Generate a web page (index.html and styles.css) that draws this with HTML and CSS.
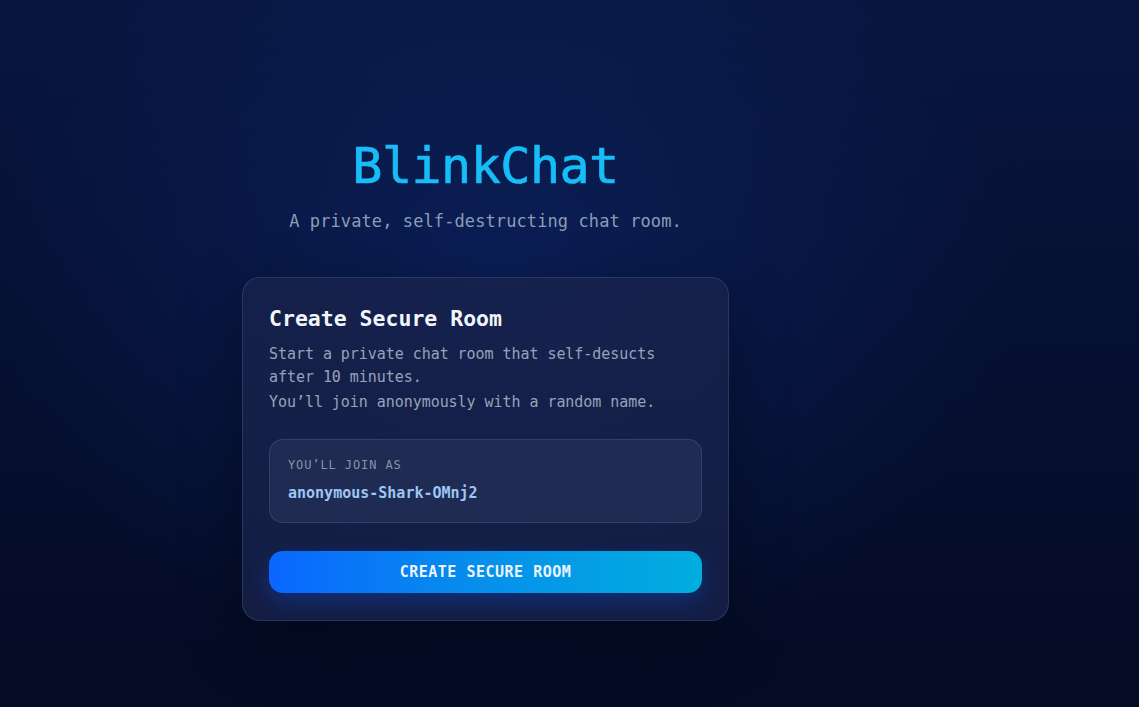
FILE: index.html
```html
<!DOCTYPE html>
<html lang="en">
  <head>
    <meta charset="UTF-8" />
    <meta name="viewport" content="width=device-width, initial-scale=1.0" />
    <title>BlinkChat</title>
    <link rel="stylesheet" href="styles.css">
  </head>
  <body>
    <main class="lobby">
      <header class="brand">
        <h1 class="brand-title">BlinkChat</h1>
        <p class="brand-tagline">A private, self-destructing chat room.</p>
      </header>

      <section class="room-card">
        <h2 class="room-title">Create Secure Room</h2>
        <p class="room-text">Start a private chat room that self-desucts after 10 minutes.</p>
        <p class="room-text room-text-last">You’ll join anonymously with a random name.</p>

        <div class="identity">
          <span class="identity-label">You’ll join as</span>
          <span class="identity-name">anonymous-Shark-OMnj2</span>
        </div>

        <button class="create-button">Create Secure Room</button>
      </section>
    </main>
  </body>
</html>
```

FILE: styles.css
```css
html,
body {
  height: 100%;
}

body {
  margin: 0;
  font-family: "DejaVu Sans Mono", "Liberation Mono", monospace;
  color: #e6ecf7;
  background-color: #060e2a;
  background-image:
    radial-gradient(ellipse 520px 420px at 500px 260px, rgba(14, 40, 110, 0.55), rgba(14, 40, 110, 0) 100%),
    linear-gradient(180deg, #08163f 0%, #061033 45%, #040b24 100%);
  overflow: hidden;
}

.lobby {
  width: 487px;
  margin-left: 242px;
  padding-top: 135px;
  display: flex;
  flex-direction: column;
}

.brand {
  text-align: center;
  margin-bottom: 44px;
}

.brand-title {
  margin: 0;
  font-size: 50px;
  line-height: 62px;
  font-weight: 500;
  color: #17bdf7;
  letter-spacing: -0.5px;
  -webkit-text-stroke: 0.7px #17bdf7;
}

.brand-tagline {
  margin: 12px 0 0;
  font-size: 17px;
  line-height: 24px;
  color: #8c9cb8;
  letter-spacing: 0.1px;
}

.room-card {
  display: flex;
  flex-direction: column;
  padding: 26px 26px 27px;
  background: rgba(26, 36, 76, 0.72);
  border: 1px solid rgba(120, 140, 190, 0.22);
  border-radius: 18px;
  box-shadow: 0 20px 60px rgba(0, 0, 0, 0.35);
}

.room-title {
  margin: 1px 0 10px;
  font-size: 21.5px;
  line-height: 28px;
  font-weight: 700;
  color: #f1f5fc;
}

.room-text {
  margin: 0;
  font-size: 15px;
  line-height: 23px;
  color: #97a2b8;
  letter-spacing: -0.05px;
}

.room-text-last {
  margin-top: 2px;
}

.identity {
  display: flex;
  flex-direction: column;
  gap: 8px;
  margin-top: 25px;
  padding: 16px 18px 18px;
  background: rgba(40, 52, 92, 0.55);
  border: 1px solid rgba(120, 140, 190, 0.22);
  border-radius: 14px;
}

.identity-label {
  font-size: 12px;
  line-height: 18px;
  text-transform: uppercase;
  letter-spacing: 0.9px;
  color: #8a93a8;
}

.identity-name {
  font-size: 15px;
  line-height: 22px;
  font-weight: 700;
  color: #9cc6f3;
}

.create-button {
  margin-top: 28px;
  height: 42px;
  border: none;
  border-radius: 14px;
  background: linear-gradient(90deg, #0a66ff 0%, #0690eb 50%, #00aede 100%);
  color: #eaf4ff;
  font-family: inherit;
  font-size: 15px;
  font-weight: 700;
  letter-spacing: 0.5px;
  text-transform: uppercase;
  cursor: pointer;
  box-shadow: 0 8px 22px rgba(10, 90, 255, 0.3);
}

.create-button:hover {
  filter: brightness(1.08);
}
```
